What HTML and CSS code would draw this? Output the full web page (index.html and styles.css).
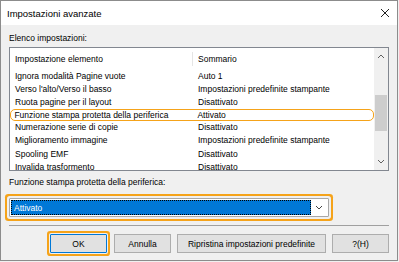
FILE: index.html
```html
<!DOCTYPE html>
<html lang="it">
<head>
    <meta charset="UTF-8">
    <title>Impostazioni avanzate</title>
    <link rel="stylesheet" href="styles.css">
</head>
<body>
    <div class="window">
        <div class="titlebar">
            <span class="title">Impostazioni avanzate</span>
            <svg class="close" width="10" height="10" viewBox="0 0 10 10">
                <path d="M1 1 L9 9 M9 1 L1 9" stroke="#222" stroke-width="1" fill="none"/>
            </svg>
        </div>
        <div class="content">
            <div class="label">Elenco impostazioni:</div>
            <div class="listbox">
                <div class="list">
                    <div class="row head">
                        <span class="c1">Impostazione elemento</span>
                        <span class="c2">Sommario</span>
                    </div>
                    <div class="row"><span class="c1">Ignora modalità Pagine vuote</span><span class="c2">Auto 1</span></div>
                    <div class="row"><span class="c1">Verso l'alto/Verso il basso</span><span class="c2">Impostazioni predefinite stampante</span></div>
                    <div class="row"><span class="c1">Ruota pagine per il layout</span><span class="c2">Disattivato</span></div>
                    <div class="row sel"><span class="c1">Funzione stampa protetta della periferica</span><span class="c2">Attivato</span></div>
                    <div class="row"><span class="c1">Numerazione serie di copie</span><span class="c2">Disattivato</span></div>
                    <div class="row"><span class="c1">Miglioramento immagine</span><span class="c2">Impostazioni predefinite stampante</span></div>
                    <div class="row"><span class="c1">Spooling EMF</span><span class="c2">Disattivato</span></div>
                    <div class="row"><span class="c1">Invalida trasformento</span><span class="c2">Disattivato</span></div>
                </div>
                <div class="scrollbar">
                    <div class="sb-btn">
                        <svg width="8" height="5" viewBox="0 0 8 5"><path d="M1 4 L4 1 L7 4" stroke="#606060" stroke-width="1" fill="none"/></svg>
                    </div>
                    <div class="sb-track"><div class="sb-thumb"></div></div>
                    <div class="sb-btn">
                        <svg width="8" height="5" viewBox="0 0 8 5"><path d="M1 1 L4 4 L7 1" stroke="#606060" stroke-width="1" fill="none"/></svg>
                    </div>
                </div>
            </div>
            <div class="label label2">Funzione stampa protetta della periferica:</div>
            <div class="combo">
                <div class="combo-value"><span>Attivato</span></div>
                <div class="combo-arrow">
                    <svg width="8" height="5" viewBox="0 0 8 5"><path d="M1 1 L4 4 L7 1" stroke="#444" stroke-width="1" fill="none"/></svg>
                </div>
            </div>
            <div class="sep"></div>
            <div class="buttons">
                <div class="btn default">OK</div>
                <div class="btn">Annulla</div>
                <div class="btn wide">Ripristina impostazioni predefinite</div>
                <div class="btn">?(H)</div>
            </div>
        </div>
    </div>
</body>
</html>
```

FILE: styles.css
```css
body { margin: 0; background: #f0f0f0; }
.window {
    width: 398px;
    height: 261px;
    box-sizing: border-box;
    border: 1px solid #8c8c8c;
    background: #f0f0f0;
    font-family: "Liberation Sans", Arial, sans-serif;
    font-size: 8.5px;
    color: #000;
    display: flex;
    flex-direction: column;
}
.titlebar {
    height: 24px;
    background: #fff;
    display: flex;
    align-items: center;
    justify-content: space-between;
    padding: 0 7px 0 6px;
    font-size: 9.5px;
}
.content { padding: 7px 8px 0 8px; }
.label { line-height: 12px; }
.label2 { margin-top: 5px; }

.listbox {
    margin-top: 3px;
    height: 124px;
    box-sizing: border-box;
    border: 1px solid #828790;
    background: #fff;
    display: flex;
    overflow: hidden;
}
.list { flex: 1; }
.row { display: flex; align-items: center; height: 13.2px; flex-shrink: 0; white-space: nowrap; }
.row.head { height: 21px; }
.c1 { width: 178px; padding-left: 5px; }
.c2 { padding-left: 5px; }
.head .c1 { border-right: 1px solid #e5e5e5; width: 177px; line-height: 14px; }
.row.sel {
    border: 1.6px solid #f5a31a;
    border-radius: 5px;
    height: 10px;
}
.row.sel .c1 { padding-left: 3.4px; }

.scrollbar {
    width: 14px;
    background: #f0f0f0;
    display: flex;
    flex-direction: column;
}
.sb-btn { height: 17px; display: flex; align-items: center; justify-content: center; }
.sb-track { flex: 1; }
.sb-thumb { margin: 30px 1px 0 1px; height: 36px; background: #cdcdcd; }

.combo {
    margin-top: 10px;
    width: 320px;
    height: 19px;
    box-sizing: border-box;
    border: 1px solid #a8a8a8;
    background: #fff;
    display: flex;
    padding: 1px;
    border-radius: 1px;
    box-shadow: 0 0 0 2px #f0f0f0, 0 0 0 4px #f5a31a;
}
.combo-value {
    flex: 1;
    background: #0078d7;
    color: #fff;
    border: 1px dotted #000;
    display: flex;
    align-items: center;
    padding-left: 2px;
}
.combo-arrow { width: 16px; display: flex; align-items: center; justify-content: center; }

.sep { margin-top: 8px; border-top: 1px solid #a0a0a0; }

.buttons {
    margin-top: 8px;
    display: flex;
    justify-content: flex-end;
    gap: 6px;
}
.btn {
    width: 57px;
    height: 19px;
    box-sizing: border-box;
    border: 1px solid #adadad;
    background: #e1e1e1;
    display: flex;
    align-items: center;
    justify-content: center;
    white-space: nowrap;
}
.btn.wide { width: 149px; }
.btn.default {
    border: 1px solid #0078d7;
    box-shadow: 0 0 0 1px #f0f0f0, 0 0 0 3px #f5a31a;
    border-radius: 1px;
    margin-right: 1px;
}
```
